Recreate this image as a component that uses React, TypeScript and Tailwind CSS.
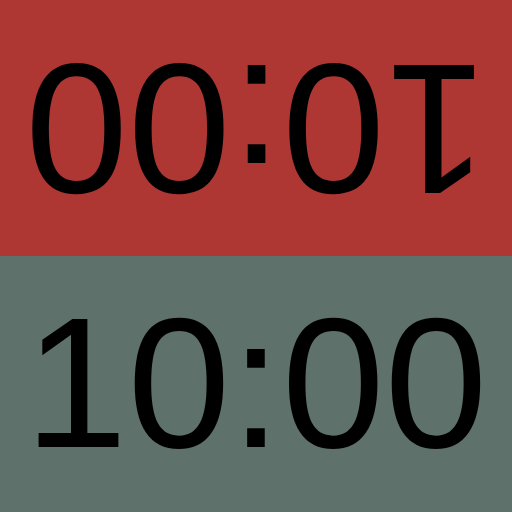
export default function App() {
  return (
    <div className="flex h-[512px] w-[512px] flex-col">
      <div className="flex h-[256px] items-center justify-center bg-[#ae3734]">
        <div style={{ fontFamily: 'Arial', fontSize: 185 }} className="rotate-180 leading-normal text-black">10:00</div>
      </div>
      <div className="flex h-[256px] items-center justify-center bg-[#5e716b]">
        <div style={{ fontFamily: 'Arial', fontSize: 185 }} className="leading-normal text-black">10:00</div>
      </div>
    </div>
  );
}
